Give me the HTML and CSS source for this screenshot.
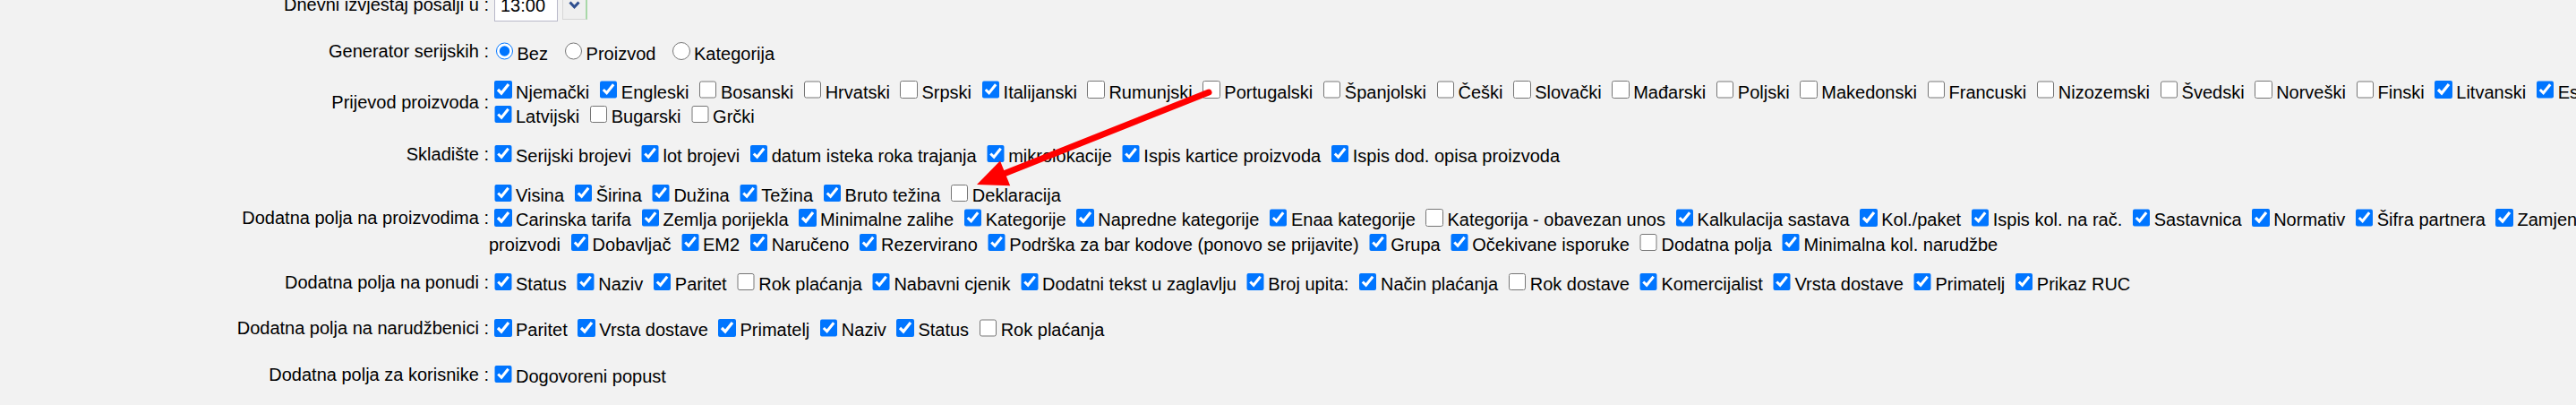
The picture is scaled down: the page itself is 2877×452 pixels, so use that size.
FILE: index.html
```html
<!DOCTYPE html>
<html lang="hr">
<head>
<meta charset="utf-8">
<title>Postavke</title>
<link rel="stylesheet" href="styles.css">
</head>
<body>
<div class="page">
<table class="settings">
<colgroup><col class="c-label"><col class="c-value"></colgroup>
<tr class="row">
<td class="label">Dnevni izvještaj pošalji u :</td>
<td class="value"><span class="time-field">13:00</span><span class="time-btn"><svg class="chev" width="13" height="9" viewBox="0 0 13 9"><path d="M1.5 1.5 L6.5 6.8 L11.5 1.5" fill="none" stroke="#2f4f8f" stroke-width="3"/></svg></span></td>
</tr>
<tr class="row">
<td class="label">Generator serijskih :</td>
<td class="value"><input type="radio" name="gen" checked>Bez&nbsp;
<input type="radio" name="gen">Proizvod&nbsp;
<input type="radio" name="gen">Kategorija</td>
</tr>
<tr class="row">
<td class="label">Prijevod proizvoda :</td>
<td class="value"><input type="checkbox" checked>Njemački
<input type="checkbox" checked>Engleski
<input type="checkbox">Bosanski
<input type="checkbox">Hrvatski
<input type="checkbox">Srpski
<input type="checkbox" checked>Italijanski
<input type="checkbox">Rumunjski
<input type="checkbox">Portugalski
<input type="checkbox">Španjolski
<input type="checkbox">Češki
<input type="checkbox">Slovački
<input type="checkbox">Mađarski
<input type="checkbox">Poljski
<input type="checkbox">Makedonski
<input type="checkbox">Francuski
<input type="checkbox">Nizozemski
<input type="checkbox">Švedski
<input type="checkbox">Norveški
<input type="checkbox">Finski
<input type="checkbox" checked>Litvanski
<input type="checkbox" checked>Estonski
<input type="checkbox" checked>Latvijski
<input type="checkbox">Bugarski
<input type="checkbox">Grčki</td>
</tr>
<tr class="row">
<td class="label">Skladište :</td>
<td class="value"><input type="checkbox" checked>Serijski brojevi
<input type="checkbox" checked>lot brojevi
<input type="checkbox" checked>datum isteka roka trajanja
<input type="checkbox" checked>mikrolokacije
<input type="checkbox" checked>Ispis kartice proizvoda
<input type="checkbox" checked>Ispis dod. opisa proizvoda</td>
</tr>
<tr class="row">
<td class="label">Dodatna polja na proizvodima :</td>
<td class="value"><input type="checkbox" checked>Visina
<input type="checkbox" checked>Širina
<input type="checkbox" checked>Dužina
<input type="checkbox" checked>Težina
<input type="checkbox" checked>Bruto težina
<input type="checkbox">Deklaracija<br>
<input type="checkbox" checked>Carinska tarifa
<input type="checkbox" checked>Zemlja porijekla
<input type="checkbox" checked>Minimalne zalihe
<input type="checkbox" checked>Kategorije
<input type="checkbox" checked>Napredne kategorije
<input type="checkbox" checked>Enaa kategorije
<input type="checkbox">Kategorija - obavezan unos
<input type="checkbox" checked>Kalkulacija sastava
<input type="checkbox" checked>Kol./paket
<input type="checkbox" checked>Ispis kol. na rač.
<input type="checkbox" checked>Sastavnica
<input type="checkbox" checked>Normativ
<input type="checkbox" checked>Šifra partnera
<input type="checkbox" checked>Zamjenjski <span>proizvodi</span>
<input type="checkbox" checked>Dobavljač
<input type="checkbox" checked>EM2
<input type="checkbox" checked>Naručeno
<input type="checkbox" checked>Rezervirano
<input type="checkbox" checked>Podrška za bar kodove (ponovo se prijavite)
<input type="checkbox" checked>Grupa
<input type="checkbox" checked>Očekivane isporuke
<input type="checkbox">Dodatna polja
<input type="checkbox" checked>Minimalna kol. narudžbe</td>
</tr>
<tr class="row">
<td class="label">Dodatna polja na ponudi :</td>
<td class="value"><input type="checkbox" checked>Status
<input type="checkbox" checked>Naziv
<input type="checkbox" checked>Paritet
<input type="checkbox">Rok plaćanja
<input type="checkbox" checked>Nabavni cjenik
<input type="checkbox" checked>Dodatni tekst u zaglavlju
<input type="checkbox" checked>Broj upita:
<input type="checkbox" checked>Način plaćanja
<input type="checkbox">Rok dostave
<input type="checkbox" checked>Komercijalist
<input type="checkbox" checked>Vrsta dostave
<input type="checkbox" checked>Primatelj
<input type="checkbox" checked>Prikaz RUC</td>
</tr>
<tr class="row">
<td class="label">Dodatna polja na narudžbenici :</td>
<td class="value"><input type="checkbox" checked>Paritet
<input type="checkbox" checked>Vrsta dostave
<input type="checkbox" checked>Primatelj
<input type="checkbox" checked>Naziv
<input type="checkbox" checked>Status
<input type="checkbox">Rok plaćanja</td>
</tr>
<tr class="row">
<td class="label">Dodatna polja za korisnike :</td>
<td class="value"><input type="checkbox" checked>Dogovoreni popust</td>
</tr>
<tr class="row">
<td class="label">Dodatna polja na računu :</td>
<td class="value"><input type="checkbox" checked>Vrsta dostave
<input type="checkbox" checked>Status
<input type="checkbox" checked>Paritet
<input type="checkbox" checked>Popust
<input type="checkbox" checked>Dodatni tekst u zaglavlju
<input type="checkbox" checked>Dodatni tekst u podnožju
<input type="checkbox">Napomena
<input type="checkbox" checked>Kol./paket
<input type="checkbox" checked>Ispis dodatnog opisa proizvoda na računu
<input type="checkbox" checked>Prikaži dodatne informacije o proizvodima na ispisu računa i otpremnice
<input type="checkbox" checked>Grupa
<input type="checkbox" checked>Rok plaćanja
<input type="checkbox" checked>Primatelj
<input type="checkbox" checked>Komercijalist</td>
</tr>
</table>
</div>
<svg class="arrow" width="2877" height="452" viewBox="0 0 2877 452">
<line x1="1350" y1="103" x2="1121" y2="194" stroke="#ff0000" stroke-width="7" stroke-linecap="round"/>
<polygon points="1091,206 1117,179.5 1128.2,207.3" fill="#ff0000"/>
</svg>
</body>
</html>
```

FILE: styles.css
```css
html, body {
  margin: 0;
  padding: 0;
  background: #f2f2f2;
  overflow: hidden;
}

.page {
  font-family: "Liberation Sans", Arial, sans-serif;
  font-size: 20px;
  color: #000;
  margin-top: -20px;
}

.settings {
  border-collapse: collapse;
  table-layout: fixed;
  width: 2959.5px;
}

.c-label {
  width: 546px;
}

.row {
  height: 51.5px;
}

.settings td {
  padding: 4.5px 0;
  vertical-align: middle;
  line-height: 23px;
}

.label {
  text-align: right;
  white-space: nowrap;
}

.value {
  padding-left: 2px;
}

.value input[type="checkbox"] {
  width: 19.5px;
  height: 19.5px;
  margin: 2.93px 4.5px 4.5px 6px;
}

.value input[type="radio"] {
  width: 19.5px;
  height: 19.5px;
  margin: 4.5px 4.5px 0 7.5px;
}

.time-field {
  display: inline-block;
  vertical-align: middle;
  box-sizing: border-box;
  width: 71px;
  height: 36px;
  margin-left: 6px;
  padding: 0 6px;
  line-height: 34px;
  background: #fff;
  border: 1px solid #b9b9c9;
}

.time-btn {
  display: inline-flex;
  align-items: center;
  justify-content: center;
  vertical-align: middle;
  box-sizing: border-box;
  width: 28px;
  height: 33px;
  margin-left: 5px;
  background: #efefef;
  border: 1px solid #d6d6d6;
  border-right: 2px solid #a8d8a8;
}

.chev {
  display: block;
}

.arrow {
  position: absolute;
  left: 0;
  top: 0;
  pointer-events: none;
}
```
